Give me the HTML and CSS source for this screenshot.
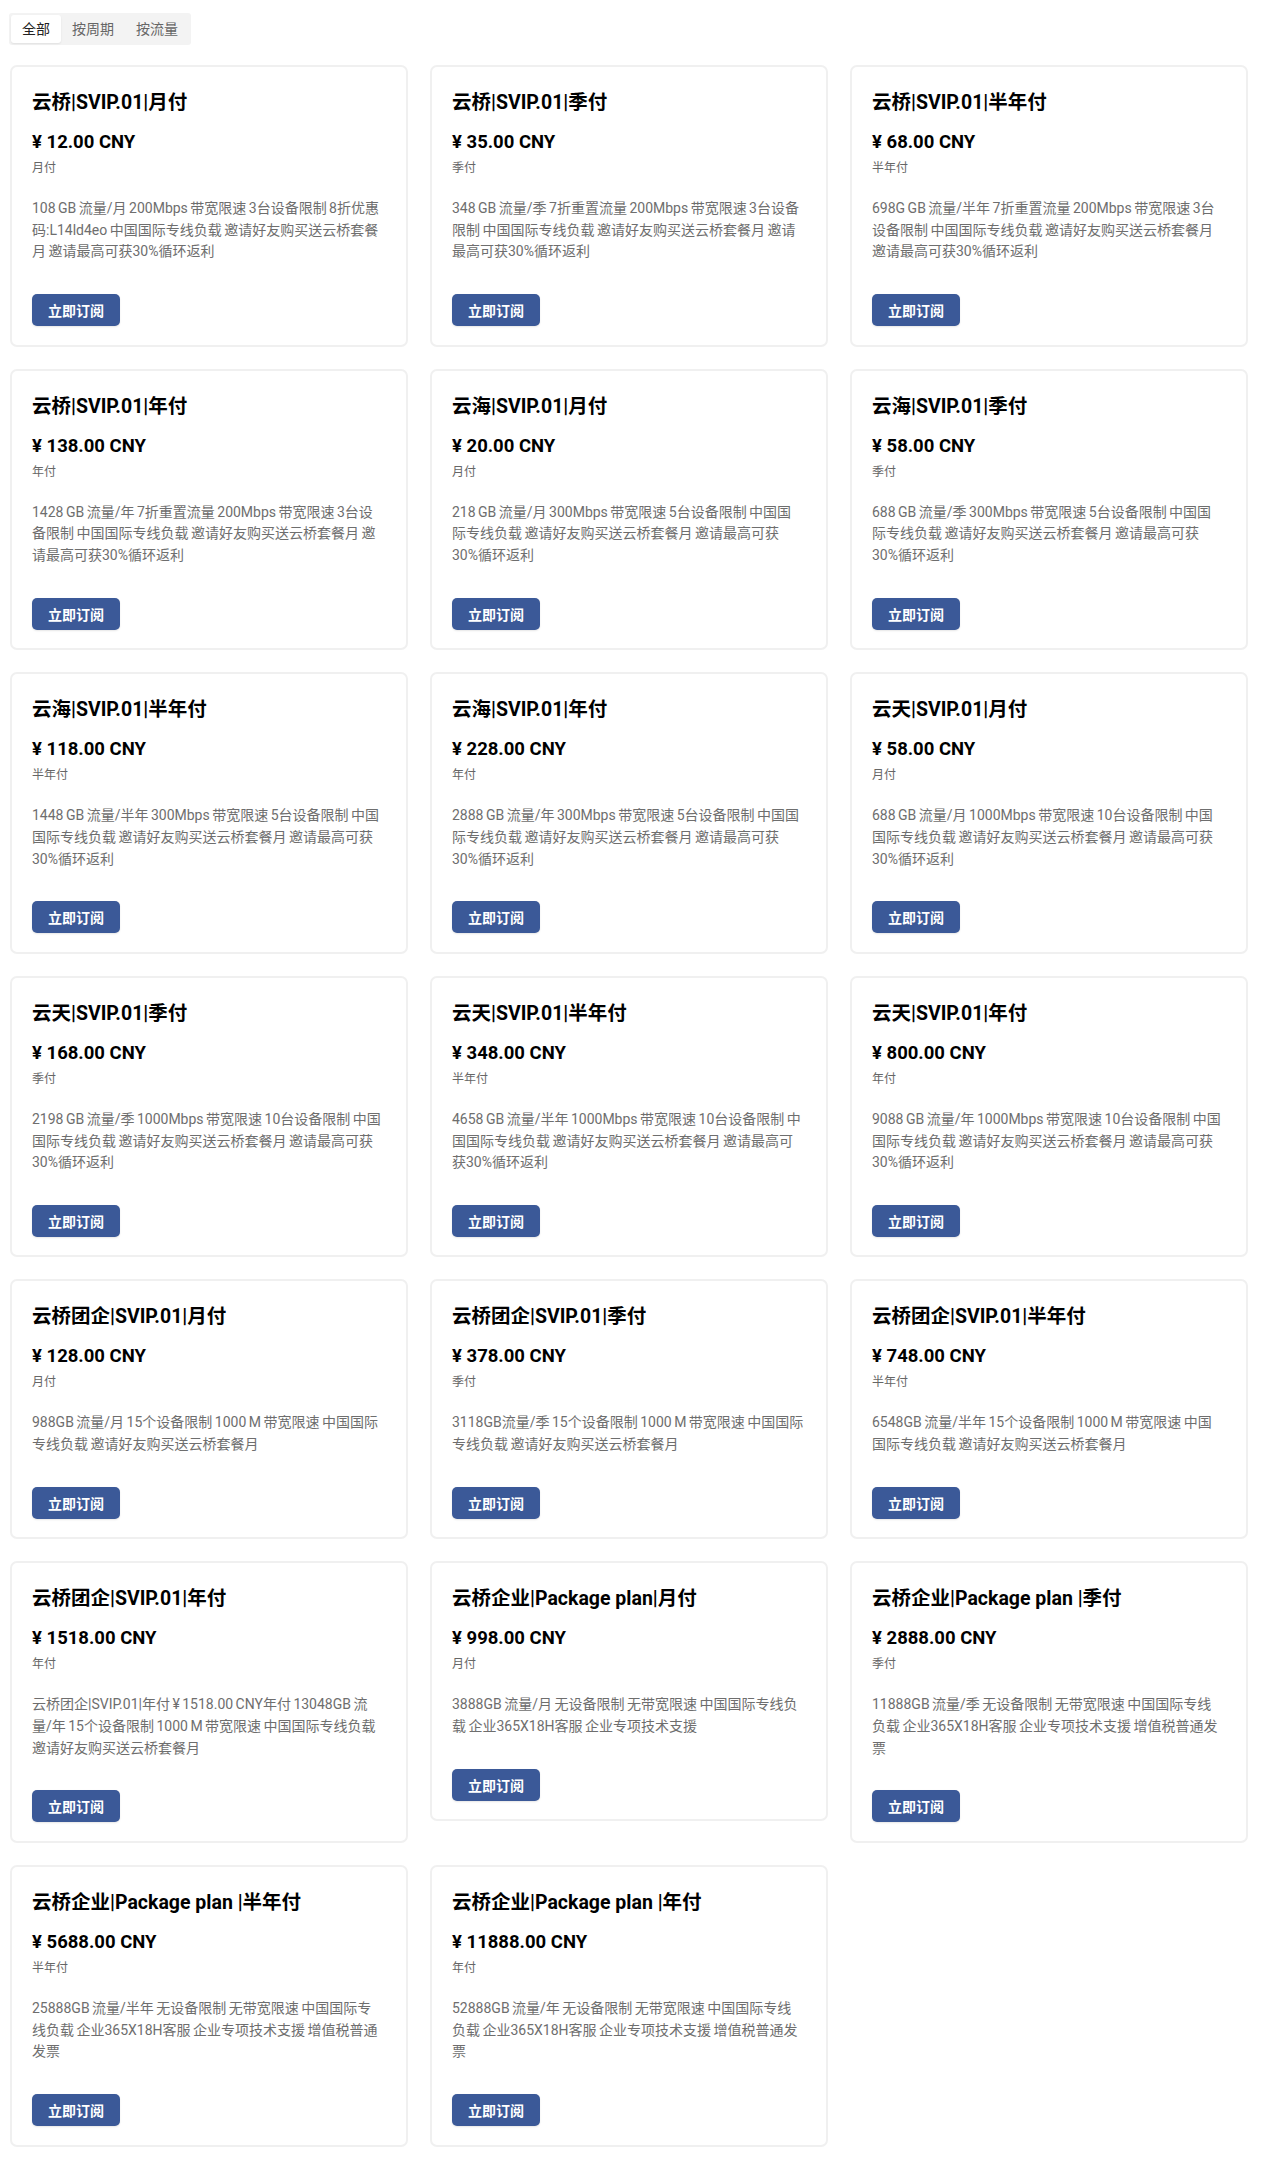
FILE: index.html
```html
<!DOCTYPE html>
<html lang="zh-CN">
<head>
<meta charset="utf-8">
<title>套餐</title>
<link rel="stylesheet" href="styles.css">
</head>
<body>
<div class="tabs">
  <span class="tab active">全部</span>
  <span class="tab">按周期</span>
  <span class="tab">按流量</span>
</div>
<div class="grid">
  <div class="card"><h3 class="title">云桥|SVIP.01|月付</h3><div class="price">¥ 12.00 CNY</div><div class="period">月付</div><p class="desc">108 GB 流量/月 200Mbps 带宽限速 3台设备限制 8折优惠码:L14ld4eo 中国国际专线负载 邀请好友购买送云桥套餐月 邀请最高可获30%循环返利</p><button class="btn">立即订阅</button></div>
  <div class="card"><h3 class="title">云桥|SVIP.01|季付</h3><div class="price">¥ 35.00 CNY</div><div class="period">季付</div><p class="desc">348 GB 流量/季 7折重置流量 200Mbps 带宽限速 3台设备限制 中国国际专线负载 邀请好友购买送云桥套餐月 邀请最高可获30%循环返利</p><button class="btn">立即订阅</button></div>
  <div class="card"><h3 class="title">云桥|SVIP.01|半年付</h3><div class="price">¥ 68.00 CNY</div><div class="period">半年付</div><p class="desc">698G GB 流量/半年 7折重置流量 200Mbps 带宽限速 3台设备限制 中国国际专线负载 邀请好友购买送云桥套餐月 邀请最高可获30%循环返利</p><button class="btn">立即订阅</button></div>

  <div class="card"><h3 class="title">云桥|SVIP.01|年付</h3><div class="price">¥ 138.00 CNY</div><div class="period">年付</div><p class="desc">1428 GB 流量/年 7折重置流量 200Mbps 带宽限速 3台设备限制 中国国际专线负载 邀请好友购买送云桥套餐月 邀请最高可获30%循环返利</p><button class="btn">立即订阅</button></div>
  <div class="card"><h3 class="title">云海|SVIP.01|月付</h3><div class="price">¥ 20.00 CNY</div><div class="period">月付</div><p class="desc">218 GB 流量/月 300Mbps 带宽限速 5台设备限制 中国国际专线负载 邀请好友购买送云桥套餐月 邀请最高可获30%循环返利</p><button class="btn">立即订阅</button></div>
  <div class="card"><h3 class="title">云海|SVIP.01|季付</h3><div class="price">¥ 58.00 CNY</div><div class="period">季付</div><p class="desc">688 GB 流量/季 300Mbps 带宽限速 5台设备限制 中国国际专线负载 邀请好友购买送云桥套餐月 邀请最高可获30%循环返利</p><button class="btn">立即订阅</button></div>

  <div class="card"><h3 class="title">云海|SVIP.01|半年付</h3><div class="price">¥ 118.00 CNY</div><div class="period">半年付</div><p class="desc">1448 GB 流量/半年 300Mbps 带宽限速 5台设备限制 中国国际专线负载 邀请好友购买送云桥套餐月 邀请最高可获30%循环返利</p><button class="btn">立即订阅</button></div>
  <div class="card"><h3 class="title">云海|SVIP.01|年付</h3><div class="price">¥ 228.00 CNY</div><div class="period">年付</div><p class="desc">2888 GB 流量/年 300Mbps 带宽限速 5台设备限制 中国国际专线负载 邀请好友购买送云桥套餐月 邀请最高可获30%循环返利</p><button class="btn">立即订阅</button></div>
  <div class="card"><h3 class="title">云天|SVIP.01|月付</h3><div class="price">¥ 58.00 CNY</div><div class="period">月付</div><p class="desc">688 GB 流量/月 1000Mbps 带宽限速 10台设备限制 中国国际专线负载 邀请好友购买送云桥套餐月 邀请最高可获30%循环返利</p><button class="btn">立即订阅</button></div>

  <div class="card"><h3 class="title">云天|SVIP.01|季付</h3><div class="price">¥ 168.00 CNY</div><div class="period">季付</div><p class="desc">2198 GB 流量/季 1000Mbps 带宽限速 10台设备限制 中国国际专线负载 邀请好友购买送云桥套餐月 邀请最高可获30%循环返利</p><button class="btn">立即订阅</button></div>
  <div class="card"><h3 class="title">云天|SVIP.01|半年付</h3><div class="price">¥ 348.00 CNY</div><div class="period">半年付</div><p class="desc">4658 GB 流量/半年 1000Mbps 带宽限速 10台设备限制 中国国际专线负载 邀请好友购买送云桥套餐月 邀请最高可获30%循环返利</p><button class="btn">立即订阅</button></div>
  <div class="card"><h3 class="title">云天|SVIP.01|年付</h3><div class="price">¥ 800.00 CNY</div><div class="period">年付</div><p class="desc">9088 GB 流量/年 1000Mbps 带宽限速 10台设备限制 中国国际专线负载 邀请好友购买送云桥套餐月 邀请最高可获30%循环返利</p><button class="btn">立即订阅</button></div>

  <div class="card"><h3 class="title">云桥团企|SVIP.01|月付</h3><div class="price">¥ 128.00 CNY</div><div class="period">月付</div><p class="desc">988GB 流量/月 15个设备限制 1000 M 带宽限速 中国国际专线负载 邀请好友购买送云桥套餐月</p><button class="btn">立即订阅</button></div>
  <div class="card"><h3 class="title">云桥团企|SVIP.01|季付</h3><div class="price">¥ 378.00 CNY</div><div class="period">季付</div><p class="desc">3118GB流量/季 15个设备限制 1000 M 带宽限速 中国国际专线负载 邀请好友购买送云桥套餐月</p><button class="btn">立即订阅</button></div>
  <div class="card"><h3 class="title">云桥团企|SVIP.01|半年付</h3><div class="price">¥ 748.00 CNY</div><div class="period">半年付</div><p class="desc">6548GB 流量/半年 15个设备限制 1000 M 带宽限速 中国国际专线负载 邀请好友购买送云桥套餐月</p><button class="btn">立即订阅</button></div>

  <div class="card"><h3 class="title">云桥团企|SVIP.01|年付</h3><div class="price">¥ 1518.00 CNY</div><div class="period">年付</div><p class="desc">云桥团企|SVIP.01|年付 ¥ 1518.00 CNY年付 13048GB 流量/年 15个设备限制 1000 M 带宽限速 中国国际专线负载 邀请好友购买送云桥套餐月</p><button class="btn">立即订阅</button></div>
  <div class="card"><h3 class="title">云桥企业|Package plan|月付</h3><div class="price">¥ 998.00 CNY</div><div class="period">月付</div><p class="desc">3888GB 流量/月 无设备限制 无带宽限速 中国国际专线负载 企业365X18H客服 企业专项技术支援</p><button class="btn">立即订阅</button></div>
  <div class="card"><h3 class="title">云桥企业|Package plan |季付</h3><div class="price">¥ 2888.00 CNY</div><div class="period">季付</div><p class="desc">11888GB 流量/季 无设备限制 无带宽限速 中国国际专线负载 企业365X18H客服 企业专项技术支援 增值税普通发票</p><button class="btn">立即订阅</button></div>

  <div class="card"><h3 class="title">云桥企业|Package plan |半年付</h3><div class="price">¥ 5688.00 CNY</div><div class="period">半年付</div><p class="desc">25888GB 流量/半年 无设备限制 无带宽限速 中国国际专线负载 企业365X18H客服 企业专项技术支援 增值税普通发票</p><button class="btn">立即订阅</button></div>
  <div class="card"><h3 class="title">云桥企业|Package plan |年付</h3><div class="price">¥ 11888.00 CNY</div><div class="period">年付</div><p class="desc">52888GB 流量/年 无设备限制 无带宽限速 中国国际专线负载 企业365X18H客服 企业专项技术支援 增值税普通发票</p><button class="btn">立即订阅</button></div>
</div>
</body>
</html>
```

FILE: styles.css
```css
html, body {
  background: #ffffff;
}
body {
  margin: 8px;
  font-family: Roboto, "Noto Sans CJK SC", sans-serif;
  color: #000;
}
.tabs {
  display: inline-flex;
  margin: 5px 0 0 1px;
  padding: 2px;
  background: #f3f3f3;
  border-radius: 3px;
}
.tab {
  display: block;
  padding: 0 11px;
  height: 28px;
  line-height: 28px;
  font-size: 14px;
  color: #666;
  border-radius: 3px;
}
.tab.active {
  background: #fff;
  color: #222;
  box-shadow: 0 1px 2px rgba(0, 0, 0, 0.08);
}
.grid {
  display: grid;
  grid-template-columns: repeat(3, 1fr);
  gap: 22px;
  align-items: start;
  margin: 20px 5px 0 2px;
}
.card {
  border: 2px solid #f0f0f0;
  border-radius: 7px;
  padding: 22px 21.9px 18.5px 20px;
  background: #fff;
}
.title {
  margin: 0;
  font-size: 19.5px;
  line-height: 28px;
  font-weight: 700;
  color: #000;
}
.price {
  margin-top: 11px;
  font-size: 18.5px;
  line-height: 28px;
  font-weight: 700;
  color: #000;
}
.period {
  margin-top: 3px;
  font-size: 12px;
  line-height: 18px;
  color: #666;
}
.desc {
  margin: 21px 0 0;
  font-size: 14px;
  line-height: 21.7px;
  word-spacing: -1px;
  color: #6e6e6e;
}
.btn {
  display: block;
  margin-top: 31px;
  height: 32px;
  padding: 0 16px;
  border: none;
  border-radius: 5px;
  background: #3b5998;
  color: #fff;
  font-family: "Noto Sans CJK SC", sans-serif;
  font-size: 14px;
  font-weight: 700;
  box-shadow: 0 1px 2px rgba(0, 0, 0, 0.1);
}
```
